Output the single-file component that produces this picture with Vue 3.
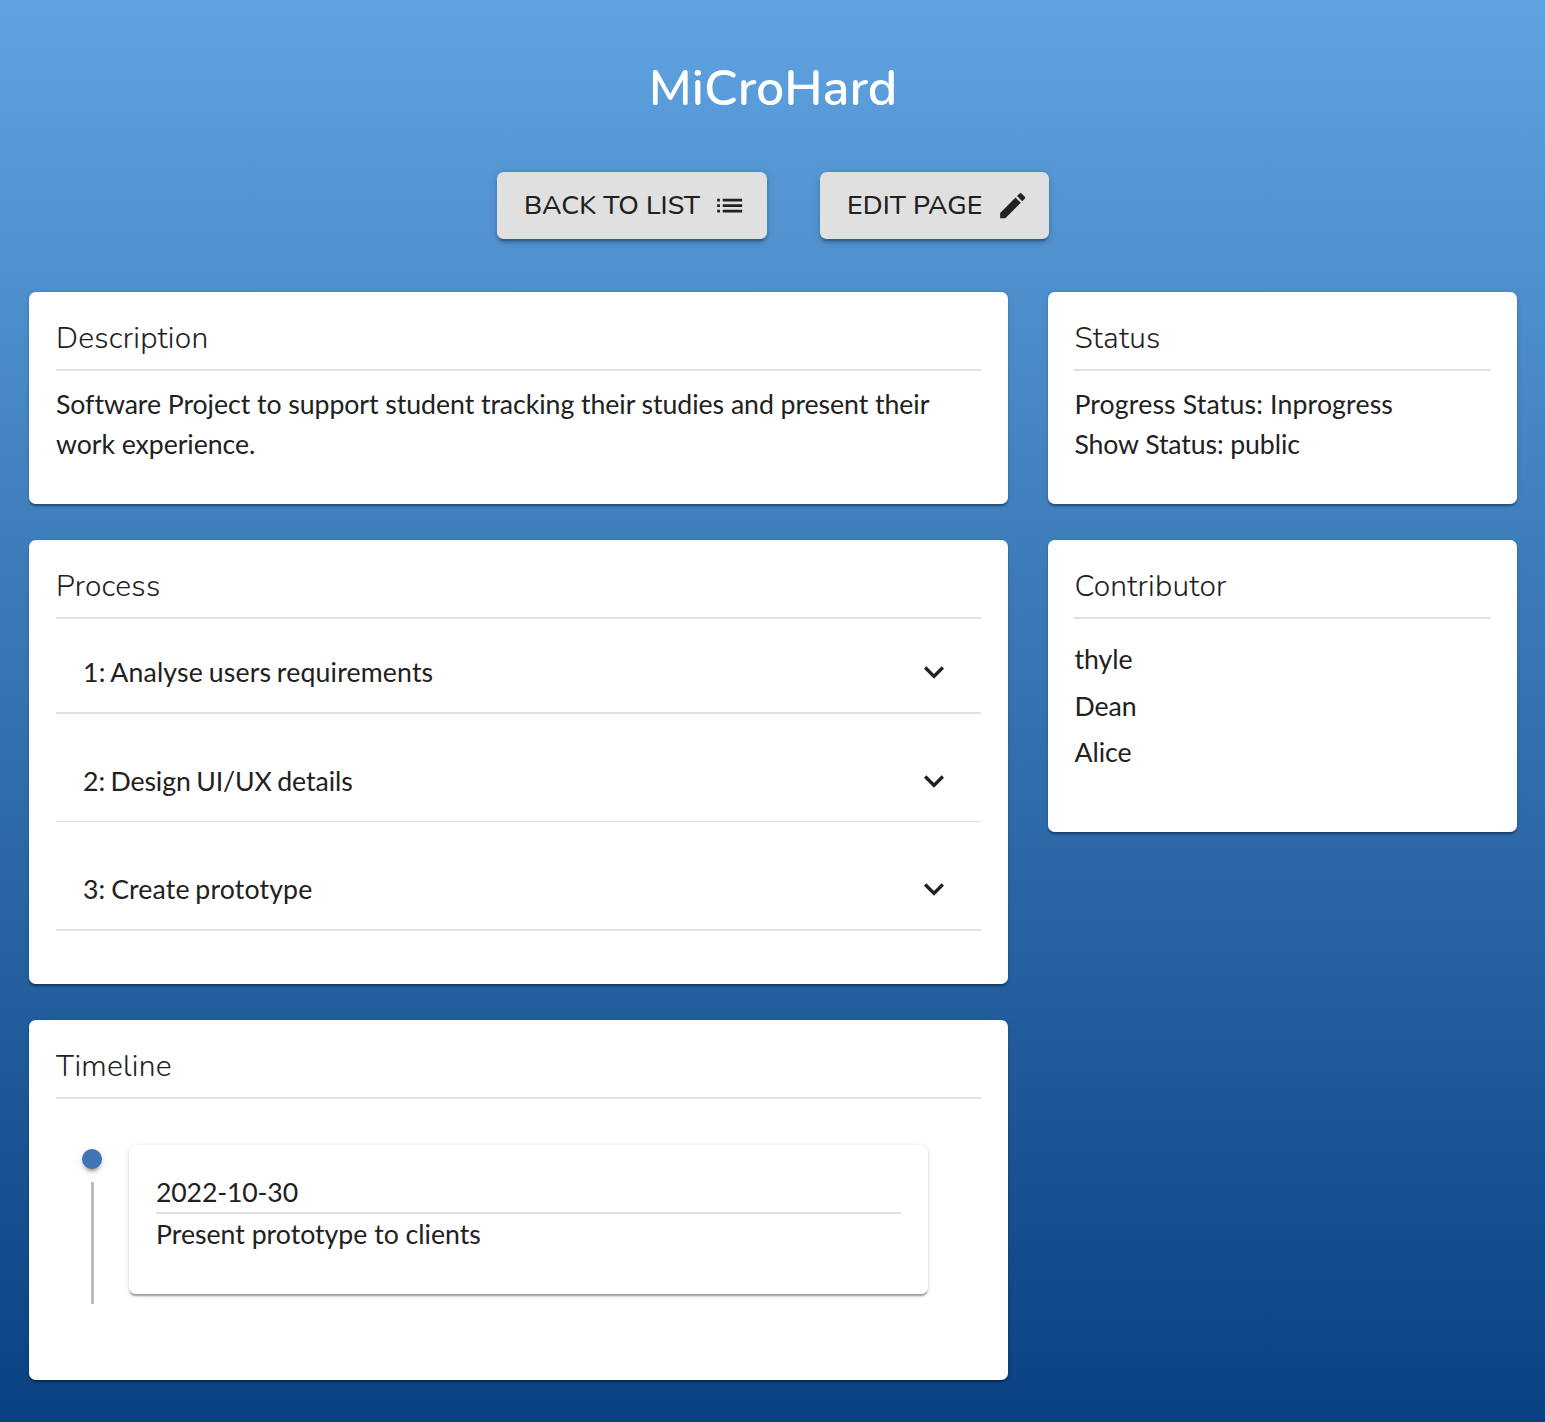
<script setup>
const steps = [
  { text: '1: Analyse users requirements', tracking: 0.17 },
  { text: '2: Design UI/UX details', tracking: -0.08 },
  { text: '3: Create prototype', tracking: 0.16 },
]
const contributors = ['thyle', 'Dean', 'Alice']
const events = [{ date: '2022-10-30', text: 'Present prototype to clients' }]
</script>

<template>
  <main class="page">
    <h1 class="title">MiCroHard</h1>
    <div class="actions">
      <button class="btn back">
        <span>BACK TO LIST</span>
        <svg viewBox="0 0 24 24"><path d="M3 13h2v-2H3v2zm0 4h2v-2H3v2zm0-8h2V7H3v2zm4 4h14v-2H7v2zm0 4h14v-2H7v2zM7 7v2h14V7H7z" /></svg>
      </button>
      <button class="btn edit">
        <span>EDIT PAGE</span>
        <svg viewBox="0 0 24 24"><path d="M3 17.25V21h3.75L17.81 9.94l-3.75-3.75L3 17.25zM20.71 7.04c.39-.39.39-1.02 0-1.41l-2.34-2.34a.9959.9959 0 0 0-1.41 0l-1.83 1.83 3.75 3.75 1.83-1.83z" /></svg>
      </button>
    </div>
    <div class="columns">
      <div class="column wide">
        <section class="card description">
          <h2>Description</h2>
          <p>Software Project to support student tracking their studies and present their work experience.</p>
        </section>
        <section class="card process">
          <h2>Process</h2>
          <div v-for="step in steps" :key="step.text" class="step">
            <span :style="{ letterSpacing: step.tracking + 'px' }">{{ step.text }}</span>
            <svg viewBox="0 0 24 24"><path d="M7.41 8.59 12 13.17l4.59-4.58L18 10l-6 6-6-6 1.41-1.41z" /></svg>
          </div>
        </section>
        <section class="card timeline">
          <h2>Timeline</h2>
          <div v-for="event in events" :key="event.date" class="event">
            <div class="rail">
              <i class="dot"></i>
              <i class="line"></i>
            </div>
            <div class="card event-card">
              <div class="date">{{ event.date }}</div>
              <div>{{ event.text }}</div>
            </div>
          </div>
        </section>
      </div>
      <div class="column narrow">
        <section class="card status">
          <h2>Status</h2>
          <p><span class="progress">Progress Status: Inprogress</span><br /><span class="show">Show Status: public</span></p>
        </section>
        <section class="card contributor">
          <h2>Contributor</h2>
          <ul>
            <li v-for="name in contributors" :key="name">{{ name }}</li>
          </ul>
        </section>
      </div>
    </div>
  </main>
</template>

<style>
body {
  margin: 0;
}
</style>

<style scoped>
* {
  box-sizing: border-box;
}
.page {
  height: 1422px;
  padding: 54px 28px 0 29px;
  overflow: hidden;
  background: linear-gradient(180deg, #5fa3e0 0%, #0a4183 100%);
  color: #212121;
  font-family: Lato, sans-serif;
  font-size: 26.667px;
  line-height: 40px;
}
.title {
  margin: 0;
  height: 70px;
  line-height: 70px;
  text-align: center;
  color: #fff;
  font-family: Nunito, Lato, sans-serif;
  font-size: 50px;
  font-weight: 600;
}
.actions {
  display: flex;
  justify-content: center;
  gap: 53px;
  margin: 48px 0 53px;
}
.btn {
  display: flex;
  align-items: center;
  justify-content: space-between;
  height: 67px;
  padding: 0 20px 0 27px;
  border: 0;
  border-radius: 6.667px;
  background: #e0e0e0;
  color: #212121;
  font-family: Nunito, Lato, sans-serif;
  font-size: 26.667px;
  font-weight: 500;
  letter-spacing: 0.06px;
  white-space: nowrap;
  box-shadow: 0 5px 1.67px -3.33px rgba(0, 0, 0, 0.2), 0 3.33px 3.33px rgba(0, 0, 0, 0.14), 0 1.67px 8.33px rgba(0, 0, 0, 0.12);
}
.btn span {
  padding-bottom: 2px;
}
.back {
  width: 270px;
  padding-right: 20.4px;
}
.edit {
  width: 229px;
}
.btn svg {
  width: 33.33px;
  height: 33.33px;
  fill: #212121;
}
.columns {
  display: flex;
  align-items: flex-start;
  justify-content: space-between;
}
.column {
  display: flex;
  flex-direction: column;
  gap: 36px;
}
.wide {
  width: 979px;
}
.narrow {
  width: 469px;
}
.card {
  padding: 27px 27px 0;
  border-radius: 6.667px;
  background: #fff;
  box-shadow: 0 3.33px 1.67px -1.67px rgba(0, 0, 0, 0.2), 0 1.67px 1.67px rgba(0, 0, 0, 0.14), 0 1.67px 5px rgba(0, 0, 0, 0.12);
}
.narrow .card {
  padding-left: 26.4px;
}
.description,
.status {
  height: 212px;
}
.process {
  height: 444px;
}
.timeline {
  height: 360px;
}
.contributor {
  height: 292px;
}
h2 {
  margin: 0;
  height: 52px;
  border-bottom: 2px solid #e0e0e0;
  font-family: Nunito, Lato, sans-serif;
  font-size: 30px;
  font-weight: 350;
  letter-spacing: 0.0075em;
  line-height: 40px;
}
p {
  margin: 13px 0 0;
}
.description p {
  letter-spacing: -0.05px;
}
.progress {
  letter-spacing: 0.16px;
}
.show {
  letter-spacing: -0.1px;
}
.step {
  display: flex;
  align-items: center;
  justify-content: space-between;
  height: 81px;
  margin-top: 14px;
  padding: 0 27px 2px;
  border-bottom: 2px solid #e0e0e0;
  word-spacing: -1.3px;
}
.step + .step {
  margin-top: 27px;
  padding-bottom: 0;
  border-bottom-width: 1px;
}
.step + .step + .step {
  height: 82px;
  border-bottom-width: 2px;
}
.step svg {
  width: 40px;
  height: 40px;
  fill: #212121;
}
ul {
  margin: 17px 0 0;
  padding: 0;
  list-style: none;
}
li {
  height: 46.6px;
  line-height: 46.6px;
}
.event {
  display: flex;
  gap: 27px;
  margin: 46px 53px 0 26px;
}
.rail {
  display: flex;
  flex-direction: column;
  align-items: center;
  width: 20px;
  padding-top: 4px;
}
.dot {
  width: 20px;
  height: 20px;
  border-radius: 50%;
  background: #4174b5;
  box-shadow: 0 5px 1.67px -3.33px rgba(0, 0, 0, 0.2), 0 3.33px 3.33px rgba(0, 0, 0, 0.14), 0 1.67px 8.33px rgba(0, 0, 0, 0.12);
}
.line {
  width: 3px;
  height: 122px;
  margin-top: 13px;
  background: #bdbdbd;
}
.event-card {
  flex: 1;
  height: 149px;
}
.date {
  height: 42px;
  border-bottom: 2px solid #e0e0e0;
  letter-spacing: -0.15px;
}
</style>
